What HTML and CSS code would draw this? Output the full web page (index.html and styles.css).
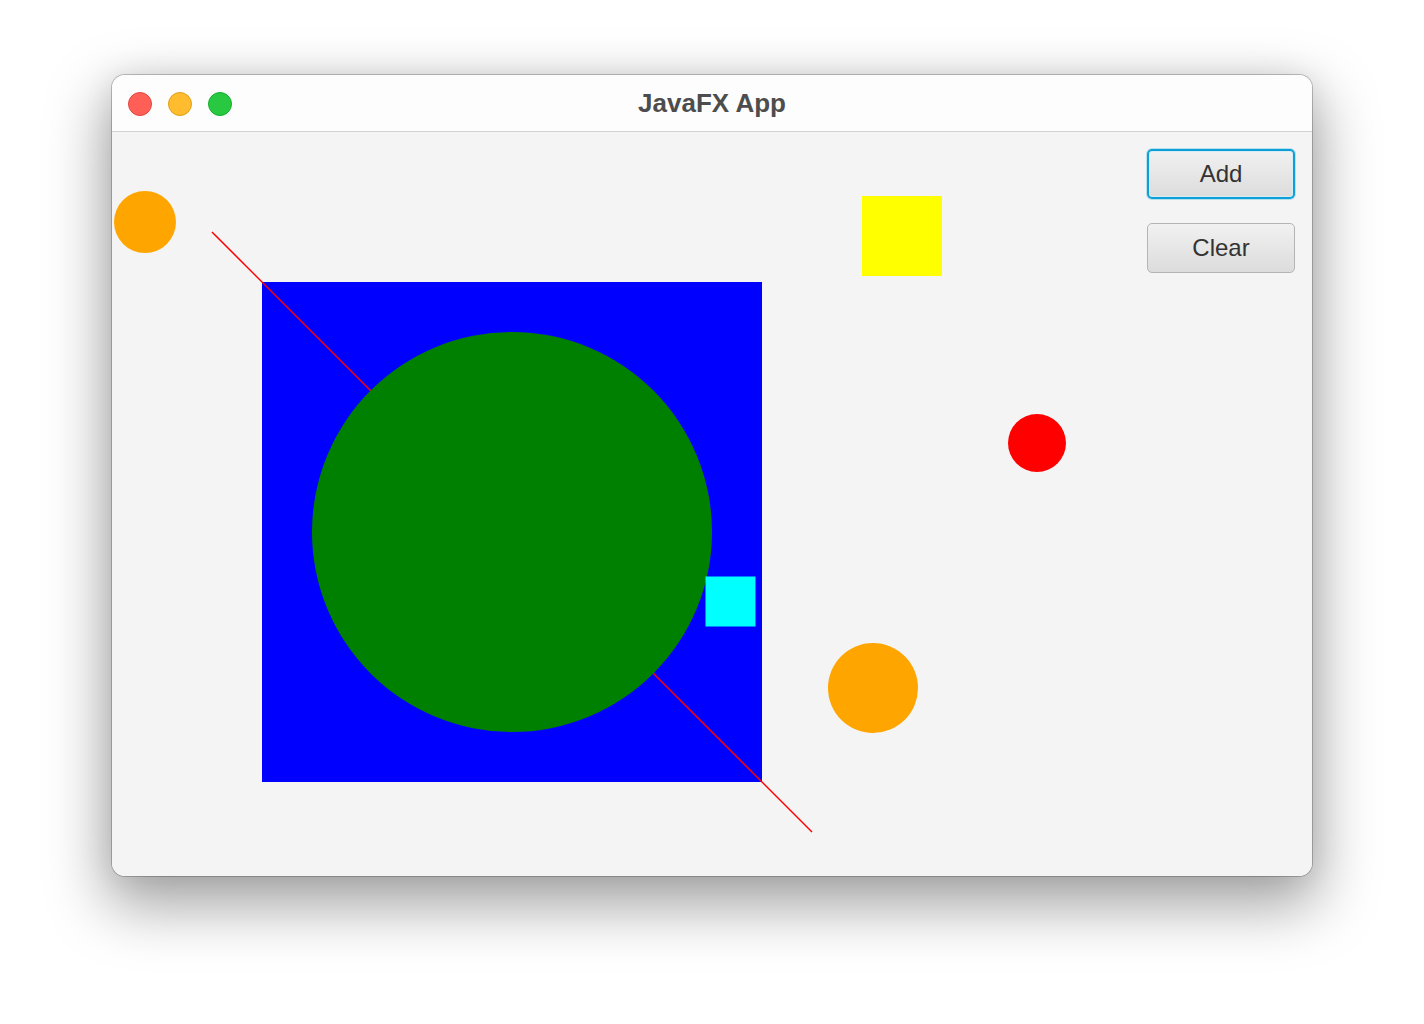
FILE: index.html
```html
<!DOCTYPE html>
<html>
<head>
<meta charset="utf-8">
<link rel="stylesheet" href="styles.css">
</head>
<body>
<div class="window">
  <div class="titlebar">
    <div class="lights">
      <span class="light red"></span>
      <span class="light yellow"></span>
      <span class="light green"></span>
    </div>
    <div class="title">JavaFX App</div>
  </div>
  <div class="content">
    <svg class="canvas" width="1200" height="744" viewBox="0 0 1200 744">
      <rect x="150" y="150" width="500" height="500" fill="#0000ff"/>
      <line x1="100" y1="100" x2="700" y2="700" stroke="#ff0000" stroke-width="1.5"/>
      <circle cx="400" cy="400" r="200" fill="#008000"/>
      <rect x="593.5" y="444.5" width="50" height="50" fill="#00ffff"/>
      <rect x="750" y="64" width="80" height="80" fill="#ffff00"/>
      <circle cx="925" cy="311" r="29" fill="#ff0000"/>
      <circle cx="761" cy="556" r="45" fill="#ffa500"/>
      <circle cx="33" cy="90" r="31" fill="#ffa500"/>
    </svg>
    <div class="controls">
      <button class="btn focused">Add</button>
      <button class="btn">Clear</button>
    </div>
  </div>
</div>
</body>
</html>
```

FILE: styles.css
```css
html, body {
  margin: 0;
  padding: 0;
  background: #ffffff;
  width: 1424px;
  height: 1024px;
  overflow: hidden;
  font-family: "Liberation Sans", Arial, sans-serif;
}

body {
  padding-top: 75px;
  padding-left: 112px;
  box-sizing: border-box;
}

.window {
  width: 1200px;
  height: 801px;
  border-radius: 13px;
  overflow: hidden;
  display: flex;
  flex-direction: column;
  background: #f4f4f4;
  box-shadow: 0 0 0 1px rgba(0, 0, 0, 0.22), 0 24px 60px 6px rgba(0, 0, 0, 0.36), 0 0 30px rgba(0, 0, 0, 0.08);
}

.titlebar {
  height: 57px;
  flex: 0 0 57px;
  box-sizing: border-box;
  background: #fdfdfd;
  border-bottom: 1px solid #d2d2d2;
  display: flex;
  align-items: center;
  position: relative;
}

.lights {
  display: flex;
  gap: 16px;
  padding-left: 16px;
  padding-top: 1px;
}

.light {
  width: 22px;
  height: 22px;
  border-radius: 50%;
  display: block;
  border: 1px solid;
}

.red { background: #ff5f57; border-color: #e2463f; }
.yellow { background: #febc2e; border-color: #e1a116; }
.green { background: #28c840; border-color: #14ae2b; }

.title {
  position: absolute;
  left: 0;
  right: 0;
  top: 0;
  bottom: 0;
  display: flex;
  align-items: center;
  justify-content: center;
  font-weight: bold;
  font-size: 26px;
  color: #4d4d4d;
  pointer-events: none;
}

.content {
  flex: 1;
  position: relative;
  background: #f4f4f4;
}

.canvas {
  position: absolute;
  left: 0;
  top: 0;
  display: block;
}

.controls {
  position: relative;
  display: flex;
  flex-direction: column;
  align-items: flex-end;
  gap: 24px;
  padding: 17px 17px 0 0;
}

.btn {
  width: 148px;
  height: 50px;
  border: 1px solid #b4b4b4;
  border-radius: 5px;
  background: linear-gradient(#f1f1f1, #dcdcdc);
  font-family: "Liberation Sans", Arial, sans-serif;
  font-size: 24px;
  color: #333333;
  padding: 0;
  margin: 0;
  box-sizing: border-box;
}

.btn.focused {
  border: 2px solid #0d9fd8;
  box-shadow: 0 0 0 1px rgba(13, 159, 216, 0.25), inset 0 0 0 1px #d6ecf4;
}
```
